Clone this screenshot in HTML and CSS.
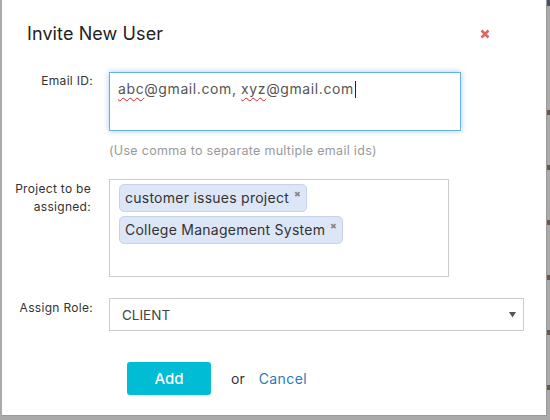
FILE: index.html
```html
<!DOCTYPE html>
<html>
<head>
<meta charset="utf-8">
<link rel="stylesheet" href="styles.css">
</head>
<body>
<div class="page">
  <div class="modal">
    <div class="header">
      <h1 class="title">Invite New User</h1>
      <svg class="close" width="10" height="10" viewBox="0 0 10 10"><path d="M1.5 1.5 L8.5 8.5 M8.5 1.5 L1.5 8.5" stroke="#e06464" stroke-width="2.6" stroke-linecap="butt"/></svg>
    </div>
    <div class="row row-email">
      <label class="label">Email ID:</label>
      <div class="field">
        <div class="textarea"><span class="typo">abc</span>@gmail.com, <span class="typo">xyz</span>@gmail.com<span class="caret"></span></div>
        <div class="hint">(Use comma to separate multiple email ids)</div>
      </div>
    </div>
    <div class="row row-project">
      <label class="label">Project to be assigned:</label>
      <div class="multi">
        <span class="tag">customer issues project<span class="x">&#x2716;</span></span>
        <span class="tag">College Management System<span class="x">&#x2716;</span></span>
      </div>
    </div>
    <div class="row row-role">
      <label class="label">Assign Role:</label>
      <div class="select">
        <span>CLIENT</span>
        <svg width="7" height="6" viewBox="0 0 7 6"><path d="M0 0 H7 L3.5 5.5 Z" fill="#555"/></svg>
      </div>
    </div>
    <div class="actions">
      <button class="btn">Add</button>
      <span class="or">or</span>
      <a class="cancel">Cancel</a>
    </div>
  </div>
  <div class="strip">
    <i></i><i></i><i></i><i></i><i></i><i></i>
  </div>
</div>
</body>
</html>
```
FILE: styles.css
```css
* { box-sizing: border-box; }
html, body { margin: 0; padding: 0; }
body {
  width: 550px;
  height: 420px;
  overflow: hidden;
  background: #aaaaaa;
  font-family: Inter, "Open Sans", sans-serif;
  color: #333;
}
.page {
  display: flex;
  height: 420px;
}
.modal {
  margin-left: 2px;
  width: 545px;
  height: 416px;
  background: #fff;
  border-right: 1px solid #9a9a9a;
  border-bottom: 1px solid #9a9a9a;
  flex-shrink: 0;
}
.header {
  display: flex;
  justify-content: space-between;
  padding: 22px 56px 0 25px;
  height: 72px;
  align-items: flex-start;
}
.title {
  margin: 0;
  font-size: 18px;
  font-weight: 400;
  line-height: 24px;
  color: #222;
  letter-spacing: 0.1px;
}
.close { margin-top: 7px; }
.row {
  display: flex;
  gap: 16px;
}
.label {
  width: 91px;
  text-align: right;
  font-size: 12px;
  line-height: 18px;
  color: #333;
  letter-spacing: 0.3px;
  flex-shrink: 0;
}
.row-email .label { padding-top: 0; }
.field { display: flex; flex-direction: column; }
.textarea {
  width: 352px;
  height: 59px;
  border: 1px solid #66afe9;
  box-shadow: 0 0 6px rgba(102, 175, 233, 0.6);
  padding: 6px 8px;
  font-size: 14px;
  line-height: 20px;
  color: #555;
  letter-spacing: 0.6px;
}
.typo {
  text-decoration: underline wavy #e02020;
  text-decoration-thickness: 1px;
  text-underline-offset: 3px;
}
.caret {
  display: inline-block;
  width: 1px;
  height: 17px;
  background: #222;
  vertical-align: -4px;
  margin-left: 1px;
}
.hint {
  margin-top: 11px;
  font-size: 12.5px;
  color: #999;
  line-height: 18px;
  letter-spacing: 0.3px;
}
.row-project { margin-top: 19px; }
.row-project .label { padding: 1px 2px 0 8px; }
.multi {
  width: 340px;
  height: 98px;
  border: 1px solid #ccc;
  padding: 4px 9px;
  display: flex;
  flex-direction: column;
  align-items: flex-start;
  gap: 4px;
}
.tag {
  display: inline-flex;
  align-items: flex-start;
  height: 28px;
  padding: 0 5px 0 5px;
  background: #dde6f7;
  border: 1px solid #c5d3ee;
  border-radius: 5px;
  font-size: 14px;
  line-height: 26px;
  color: #333;
  letter-spacing: 0.25px;
}
.x {
  font-size: 8px;
  line-height: 10px;
  color: #888;
  margin-left: 5px;
  margin-top: 4px;
}
.row-role { margin-top: 21px; }
.row-role .label { padding-top: 1px; }
.select {
  width: 415px;
  height: 33px;
  border: 1px solid #ccc;
  display: flex;
  align-items: center;
  justify-content: space-between;
  padding: 0 7px 0 12px;
  font-size: 13.5px;
  color: #444;
}
.actions {
  display: flex;
  align-items: center;
  margin-top: 31px;
  padding-left: 125px;
}
.btn {
  width: 84px;
  height: 33px;
  border: none;
  border-radius: 3px;
  background: #00bcd4;
  color: #fff;
  font-family: inherit;
  font-size: 15px;
  font-weight: 500;
  padding: 0;
}
.or {
  margin-left: 20px;
  font-size: 14px;
  color: #333;
}
.cancel {
  margin-left: 14px;
  font-size: 14px;
  color: #2a7ab8;
  letter-spacing: 0.4px;
}
.strip {
  flex: 1;
  display: flex;
  flex-direction: column;
  gap: 50px;
  padding-top: 104px;
  border-top: 6px solid #4a5060;
}
.strip i {
  display: block;
  width: 3px;
  height: 5px;
  background: #6a5a48;
}
```
